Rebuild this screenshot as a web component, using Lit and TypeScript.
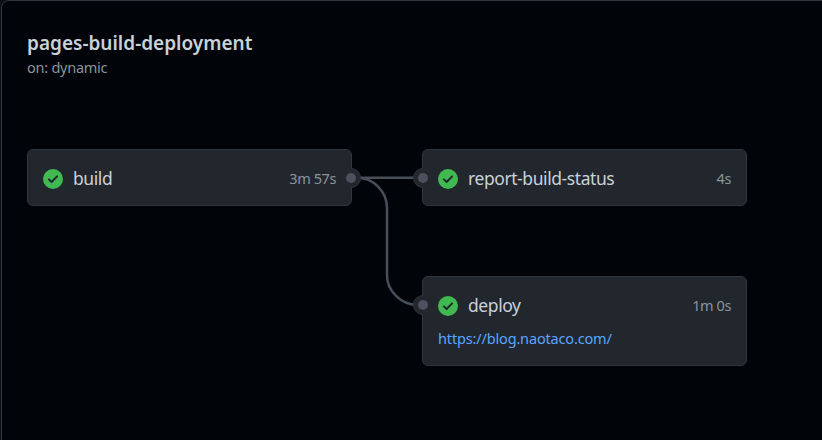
import { LitElement, html, svg, css, nothing } from "lit";
import { customElement, property } from "lit/decorators.js";

@customElement("job-card")
class JobCard extends LitElement {
  @property() name = "";
  @property() duration = "";
  @property() url = "";

  static styles = css`
    :host {
      display: block;
      box-sizing: border-box;
      border: 1px solid #30363d;
      border-radius: 6px;
      background: #22272e;
      padding: 18px 15px 0;
    }
    .row {
      display: flex;
      align-items: center;
      height: 22px;
    }
    .icon {
      display: block;
      width: 20px;
      height: 20px;
      flex: none;
    }
    .name {
      flex: 1;
      margin: -2px 0 0 10px;
      font-size: 17.5px;
      line-height: 22px;
      letter-spacing: -0.42px;
      color: #c9d1d9;
    }
    .time {
      margin-top: -2px;
      font-size: 14.5px;
      line-height: 22px;
      letter-spacing: -0.4px;
      color: #8b949e;
    }
    .link {
      display: block;
      margin-top: 11px;
      font-size: 14.5px;
      line-height: 20px;
      letter-spacing: -0.16px;
      color: #58a6ff;
      text-decoration: none;
    }
  `;

  render() {
    return html`
      <div class="row">
        <svg class="icon" viewBox="0 0 20 20">
          <circle cx="10" cy="10" r="10" fill="#3fb950" />
          <path d="M5.9 10.4 8.6 13 14.1 7.4" fill="none" stroke="#22272e" stroke-width="2" stroke-linecap="round" stroke-linejoin="round" />
        </svg>
        <span class="name">${this.name}</span>
        <span class="time">${this.duration}</span>
      </div>
      ${this.url ? html`<a class="link">${this.url}</a>` : nothing}
    `;
  }
}

@customElement("app-root")
class AppRoot extends LitElement {
  static styles = css`
    :host {
      display: block;
      height: 440px;
      overflow: hidden;
      background: #0d1117;
      font-family: "Noto Sans", "Open Sans", sans-serif;
    }
    .panel {
      box-sizing: border-box;
      width: 840px;
      height: 460px;
      margin-left: 1px;
      border: 1px solid #30363d;
      border-radius: 8px;
      background: #010409;
      padding: 30px 0 0 25px;
    }
    .title {
      margin: 0;
      font-size: 19px;
      font-weight: 600;
      line-height: 24px;
      color: #c9d1d9;
    }
    .trigger {
      font-size: 14.5px;
      line-height: 20px;
      letter-spacing: -0.25px;
      margin-top: 2px;
      color: #8b949e;
    }
    .graph {
      position: relative;
      display: grid;
      grid-template-columns: 325px 325px;
      grid-template-rows: 57px 90px;
      gap: 70px;
      width: 720px;
      margin-top: 72px;
    }
    .deploy {
      grid-column: 2;
    }
    .edges {
      position: absolute;
      left: 0;
      top: 0;
      width: 720px;
      height: 217px;
    }
    .wire {
      fill: none;
      stroke: #484f58;
      stroke-width: 2.5;
    }
    .port {
      fill: #22272e;
      stroke: #30363d;
    }
    .dot {
      fill: #4b525d;
    }
  `;

  render() {
    const ports = [
      { x: 324, y: 29, d: "M324 19.5A9.5 9.5 0 0 1 324 38.5" },
      { x: 396, y: 29, d: "M396 19.5A9.5 9.5 0 0 0 396 38.5" },
      { x: 396, y: 156, d: "M396 146.5A9.5 9.5 0 0 0 396 165.5" },
    ];
    return html`
      <section class="panel">
        <h1 class="title">pages-build-deployment</h1>
        <div class="trigger">on: dynamic</div>
        <div class="graph">
          <job-card name="build" duration="3m 57s"></job-card>
          <job-card name="report-build-status" duration="4s"></job-card>
          <job-card class="deploy" name="deploy" duration="1m 0s" url="https://blog.naotaco.com/"></job-card>
          <svg class="edges" viewBox="0 0 720 217">
            <path class="wire" d="M330 28.8H390" />
            <path class="wire" d="M330 28.8C346 28.8 360 42 360 59V126C360 142 374 155.8 390 155.8" />
            ${ports.map((p) => svg`<path class="port" d=${p.d} /><circle class="dot" cx=${p.x} cy=${p.y} r="5" />`)}
          </svg>
        </div>
      </section>
    `;
  }
}
